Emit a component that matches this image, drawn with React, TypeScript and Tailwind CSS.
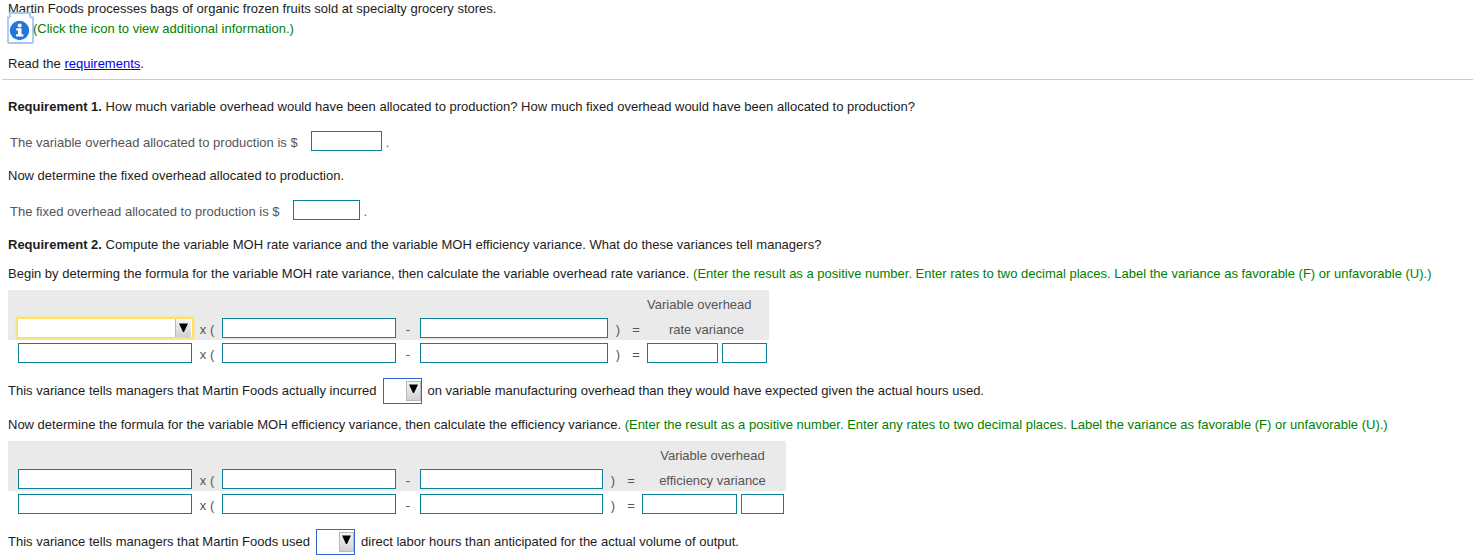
import React from "react";

type BoxProps = { label: string; className: string };

const Box: React.FC<BoxProps> = ({ label, className }) => (
  <input
    type="text"
    aria-label={label}
    className={`block h-5 border border-[#0c7f99] bg-white px-1 outline-none ${className}`}
  />
);

const Arrow: React.FC<{ className: string }> = ({ className }) => (
  <span
    aria-hidden="true"
    className={`pointer-events-none absolute flex justify-center border-[#b9b9b9] bg-linear-to-b from-[#f6f6f6] to-[#d0d0d0] ${className}`}
  >
    <svg width="9" height="9" viewBox="0 0 9 9" className="shrink-0">
      <path d="M0 0.500h9L5 9H4z" fill="#000" />
    </svg>
  </span>
);

const InlineSelect: React.FC<{ label: string }> = ({ label }) => (
  <span className="relative mx-[6px] block h-[26px] w-[39px] shrink-0">
    <select
      aria-label={label}
      className="h-full w-full appearance-none border border-[#2f66d0] bg-white outline-none"
    >
      <option></option>
    </select>
    <Arrow className="top-[3px] right-px h-5 w-[15px] items-start border pt-[2px]" />
  </span>
);

type FormulaProps = {
  name: string;
  title: string[];
  titleClass: string;
  thirdCol: string;
  lastCol: string;
  resultBox: string;
  labelBox: string;
  dropdown?: boolean;
};

const Formula: React.FC<FormulaProps> = ({
  name,
  title,
  titleClass,
  thirdCol,
  lastCol,
  resultBox,
  labelBox,
  dropdown,
}) => (
  <table className="border-collapse text-center leading-5 text-[#555]">
    <colgroup>
      <col className="w-[184px]" />
      <col className="w-[30px]" />
      <col className="w-[174px]" />
      <col className="w-6" />
      <col className={thirdCol} />
      <col className="w-5" />
      <col className="w-4" />
      <col className={lastCol} />
    </colgroup>
    <thead className="bg-[#eaeaea]">
      <tr className="h-[25px]">
        <td colSpan={7}></td>
        <th className={`p-0 pt-1 font-normal ${titleClass}`}>{title[0]}</th>
      </tr>
      <tr className="h-[25px]">
        <td className="pl-[10px]">
          {dropdown ? (
            <span className="relative -mx-px block h-5">
              <select
                aria-label={`${name} first factor`}
                className="block h-full w-full appearance-none border border-[#ffdf5c] bg-white shadow-[0_0_2px_1px_#ffdf5c] outline-none"
              >
                <option></option>
              </select>
              <Arrow className="top-px right-[2px] h-[18px] w-4 items-center border-l" />
            </span>
          ) : (
            <Box label={`${name} first factor`} className="w-full" />
          )}
        </td>
        <td className="p-0 pt-1">x (</td>
        <td className="p-0">
          <Box label={`${name} first term`} className="w-full" />
        </td>
        <td className="p-0 pt-1">-</td>
        <td className="p-0">
          <Box label={`${name} second term`} className="w-full" />
        </td>
        <td className="p-0 pt-1">)</td>
        <td className="p-0 pt-1">=</td>
        <th className="p-0 pt-1 font-normal">{title[1]}</th>
      </tr>
    </thead>
    <tbody>
      <tr className="h-[25px]">
        <td className="pl-[10px]">
          <Box label={`${name} first factor amount`} className="w-full" />
        </td>
        <td className="p-0 pt-1">x (</td>
        <td className="p-0">
          <Box label={`${name} first term amount`} className="w-full" />
        </td>
        <td className="p-0 pt-1">-</td>
        <td className="p-0">
          <Box label={`${name} second term amount`} className="w-full" />
        </td>
        <td className="p-0 pt-1">)</td>
        <td className="p-0 pt-1">=</td>
        <td className="p-0">
          <div className="flex gap-1 pr-[2px] pl-[3px]">
            <Box label={name} className={resultBox} />
            <Box label={`${name} F or U`} className={labelBox} />
          </div>
        </td>
      </tr>
    </tbody>
  </table>
);

const App: React.FC = () => {
  return (
    <main className="bg-white pt-px pl-2 font-['Liberation_Sans',Arial,sans-serif] text-[13px] leading-5 text-[#1c1c1c]">
      <p className="leading-4">
        Martin Foods processes bags of organic frozen fruits sold at specialty
        grocery stores.
      </p>
      <div className="flex h-[27px] items-end">
        <button
          type="button"
          aria-label="View additional information"
          className="-ml-px h-8 w-[26px] shrink-0 cursor-pointer"
        >
          <svg width="27" height="32" viewBox="0 0 27 32" className="max-w-none">
            <path
              d="M3 1h20v3q0 1.500 2 1.500h1V30q0 1-1 1H2q-1 0-1-1V5.500h1q1 0 1-1.500z"
              fill="none"
              stroke="#a3c6f8"
              strokeWidth="1.800"
            />
            <circle cx="12.500" cy="18.500" r="9.700" fill="#2377d8" />
            <circle cx="12.700" cy="13.500" r="2" fill="#fff" />
            <path d="M9.300 16.200h5.200v6.100h1.900v2.200H9.100v-2.200H11v-3.900H9.300z" fill="#fff" />
          </svg>
        </button>
        <p className="pb-[5px] text-[#008000]">
          (Click the icon to view additional information.)
        </p>
      </div>
      <p className="mt-[10px]">
        Read the{" "}
        <a href="#requirements" className="text-[#0000ee] underline">
          requirements
        </a>
        .
      </p>
      <hr className="mt-[5px] -ml-[6px] border-[#c9cbd6]" />

      <p className="mt-[17px]">
        <b>Requirement 1.</b> How much variable overhead would have been
        allocated to production? How much fixed overhead would have been
        allocated to production?
      </p>
      <div className="mt-4 flex h-5 pl-[2px] text-[#555]">
        <label htmlFor="variable">
          The variable overhead allocated to production is $
        </label>
        <input
          id="variable"
          type="text"
          className="-mt-[2px] mr-1 ml-[13px] h-5 w-[71px] border border-[#0c7f99] px-1 outline-none"
        />
        .
      </div>
      <p className="mt-[13px]">
        Now determine the fixed overhead allocated to production.
      </p>
      <div className="mt-4 flex h-5 pl-[2px] text-[#555]">
        <label htmlFor="fixed">
          The fixed overhead allocated to production is $
        </label>
        <input
          id="fixed"
          type="text"
          className="-mt-[2px] mr-1 ml-[13px] h-5 w-[67px] border border-[#0c7f99] px-1 outline-none"
        />
        .
      </div>

      <p className="mt-[13px]">
        <b>Requirement 2.</b> Compute the variable MOH rate variance and the
        variable MOH efficiency variance. What do these variances tell managers?
      </p>
      <p className="mt-[9px] mb-[6px]">
        Begin by determing the formula for the variable MOH rate variance, then
        calculate the variable overhead rate variance.{" "}
        <span className="text-[#008000]">
          (Enter the result as a positive number. Enter rates to two decimal
          places. Label the variance as favorable (F) or unfavorable (U).)
        </span>
      </p>
      <Formula
        name="Rate variance"
        title={["Variable overhead", "rate variance"]}
        titleClass="pl-[3px] text-left"
        thirdCol="w-[188px]"
        lastCol="w-[125px]"
        resultBox="w-[71px]"
        labelBox="w-[45px]"
        dropdown
      />

      <div className="mt-[13px] flex h-[26px] items-center">
        This variance tells managers that Martin Foods actually incurred
        <InlineSelect label="More or less on overhead" />
        on variable manufacturing overhead than they would have expected given
        the actual hours used.
      </div>
      <p className="mt-[11px] mb-[6px]">
        Now determine the formula for the variable MOH efficiency variance, then
        calculate the efficiency variance.{" "}
        <span className="text-[#008000]">
          (Enter the result as a positive number. Enter any rates to two decimal
          places. Label the variance as favorable (F) or unfavorable (U).)
        </span>
      </p>
      <Formula
        name="Efficiency variance"
        title={["Variable overhead", "efficiency variance"]}
        titleClass="text-center"
        thirdCol="w-[183px]"
        lastCol="w-[147px]"
        resultBox="w-[95px]"
        labelBox="w-[43px]"
      />
      <div className="mt-[13px] flex h-[26px] items-center">
        This variance tells managers that Martin Foods used
        <InlineSelect label="More or fewer labor hours" />
        direct labor hours than anticipated for the actual volume of output.
      </div>
    </main>
  );
};

export default App;
